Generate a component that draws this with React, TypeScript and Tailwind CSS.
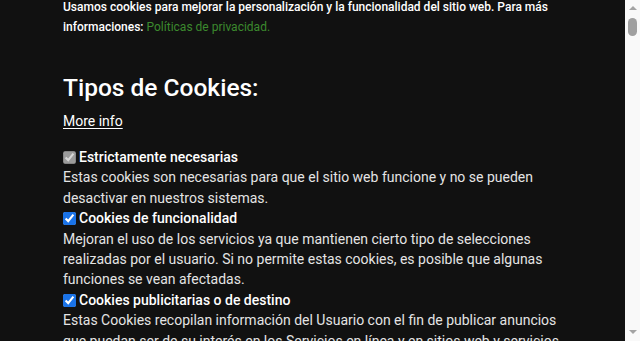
export default function App() {
  return (
    <main className="h-[341px] flex bg-[#111111] text-white font-['Roboto','Liberation_Sans',sans-serif]">

      {/* Scrollable panel */}
      <div className="flex-1 overflow-hidden">
        <div className="px-[63px] -mt-[3px] pb-10">

          {/* Intro */}
          <p className="text-[12px] leading-5 font-medium">
            Usamos cookies para mejorar la personalización y la funcionalidad del sitio web. Para más informaciones:{" "}
            <a href="#" className="text-[#3c8a2e] font-normal">Políticas de privacidad.</a>
          </p>

          <h2 className="mt-[35px] text-[24.5px] leading-8 font-medium">
            Tipos de Cookies:
          </h2>

          <a href="#" className="block mt-[7px] text-[14px] leading-5 underline underline-offset-2">
            More info
          </a>

          {/* Cookie types */}
          <div className="mt-4 text-[14px] leading-[20.4px]">

            <label className="flex items-center gap-[3px] font-medium">
              <input type="checkbox" defaultChecked disabled className="w-[13px] h-[13px]" />
              Estrictamente necesarias
            </label>
            <p className="text-[#e4e4e4]">
              Estas cookies son necesarias para que el sitio web funcione y no se pueden desactivar en nuestros sistemas.
            </p>

            <label className="flex items-center gap-[3px] font-medium">
              <input type="checkbox" defaultChecked className="w-[13px] h-[13px] accent-[#1a73e8]" />
              Cookies de funcionalidad
            </label>
            <p className="text-[#e4e4e4]">
              Mejoran el uso de los servicios ya que mantienen cierto tipo de selecciones realizadas por el usuario. Si no permite estas cookies, es posible que algunas funciones se vean afectadas.
            </p>

            <label className="flex items-center gap-[3px] font-medium">
              <input type="checkbox" defaultChecked className="w-[13px] h-[13px] accent-[#1a73e8]" />
              Cookies publicitarias o de destino
            </label>
            <p className="text-[#e4e4e4]">
              Estas Cookies recopilan información del Usuario con el fin de publicar anuncios que puedan ser de su interés en los Servicios en línea y en sitios web y servicios de terceros.
            </p>
          </div>

        </div>
      </div>

      {/* Scrollbar */}
      <div className="w-[15px] bg-[#f9f9f9] flex flex-col items-center">
        <div className="mt-[6px] w-0 h-0 border-l-[4px] border-r-[4px] border-b-[4px] border-l-transparent border-r-transparent border-b-[#a3a3a3]" />
        <div className="mt-[8px] w-[9px] h-[18px] rounded-full bg-[#a0a0a0]" />
        <div className="mt-auto mb-[7px] w-0 h-0 border-l-[4px] border-r-[4px] border-t-[4px] border-l-transparent border-r-transparent border-t-[#a3a3a3]" />
      </div>

    </main>
  );
}
